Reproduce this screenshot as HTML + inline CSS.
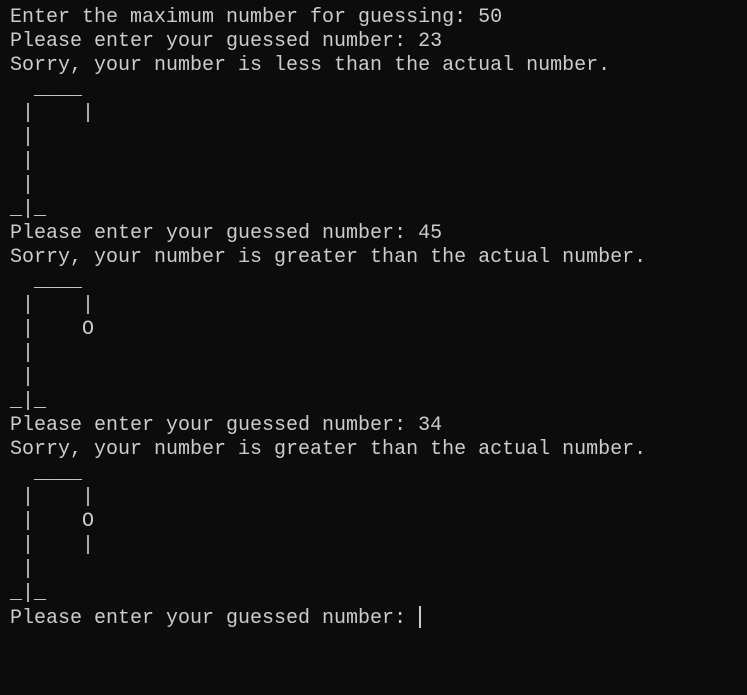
<!DOCTYPE html>
<html><head><style>
html,body{margin:0;background:#0c0c0c;width:747px;height:695px;overflow:hidden}
pre{margin:0;position:absolute;left:10px;top:6px;font-family:"Liberation Mono",monospace;font-size:20px;line-height:24px;color:#cccccc}
.c{display:inline-block;width:2px;height:22px;background:#cccccc;vertical-align:-5px;margin-left:1px}
</style></head><body><pre>Enter the maximum number for guessing: 50
Please enter your guessed number: 23
Sorry, your number is less than the actual number.
  ____
 |    |
 |
 |
 |
_|_
Please enter your guessed number: 45
Sorry, your number is greater than the actual number.
  ____
 |    |
 |    O
 |
 |
_|_
Please enter your guessed number: 34
Sorry, your number is greater than the actual number.
  ____
 |    |
 |    O
 |    |
 |
_|_
Please enter your guessed number: <span class="c"></span></pre></body></html>
